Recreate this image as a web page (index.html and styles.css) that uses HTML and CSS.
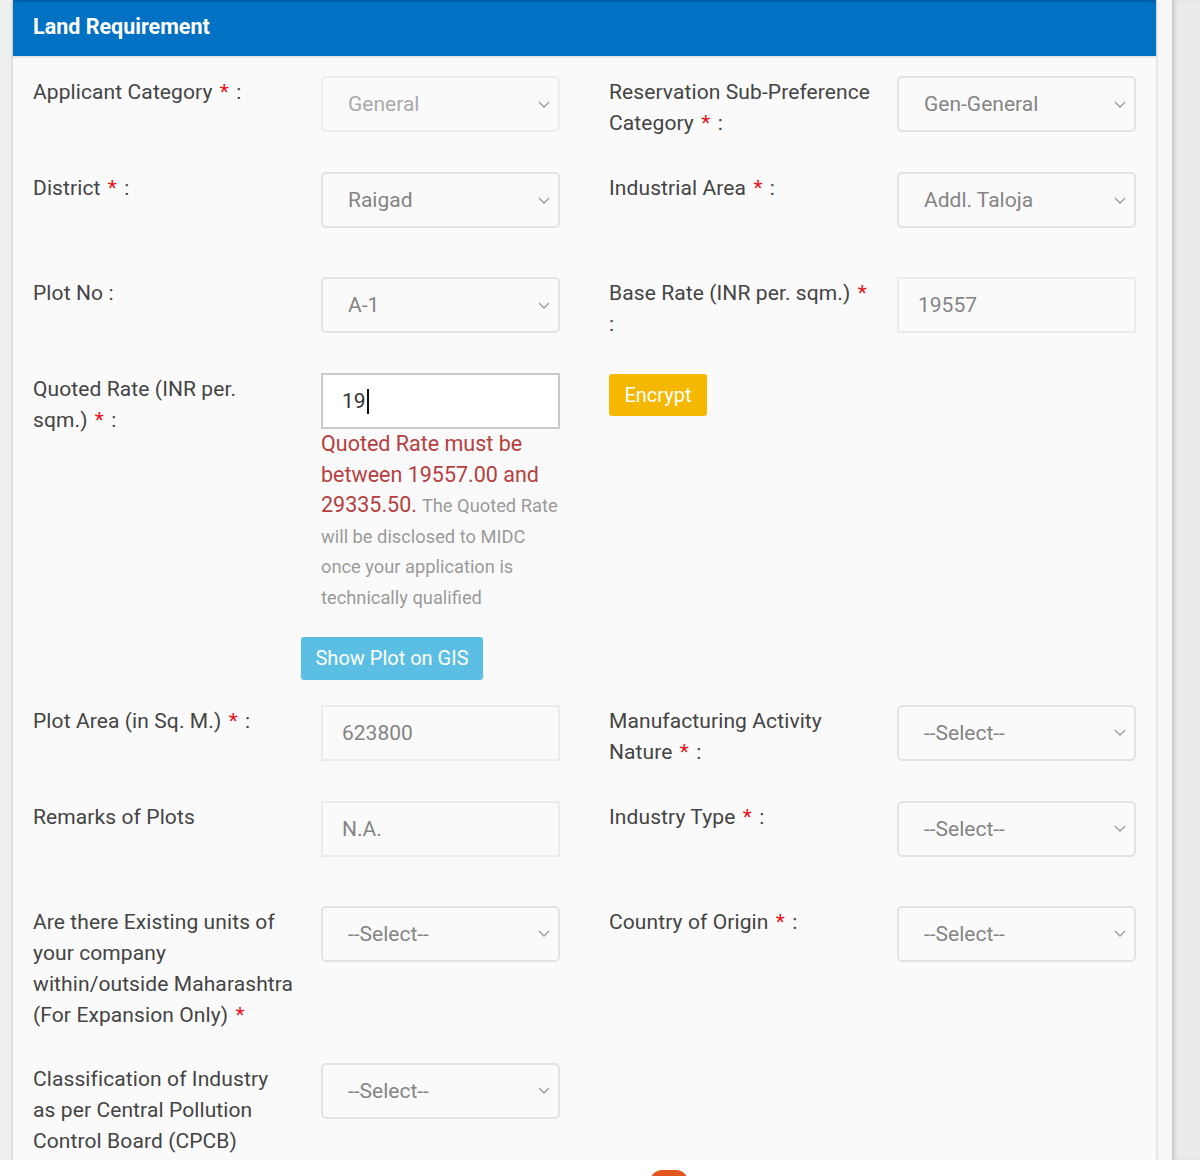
FILE: index.html
```html
<!DOCTYPE html>
<html lang="en">
<head>
<meta charset="utf-8">
<title>Land Requirement</title>
<link rel="stylesheet" href="styles.css">
</head>
<body>
<div class="screen">
  <div class="gutter-left"></div>
  <div class="panel">
    <div class="panel-heading">Land Requirement</div>
    <div class="panel-body">

      <div class="form-row">
        <div class="label">Applicant Category <span class="req">*</span> :</div>
        <div class="cell"><div class="select disabled"><span>General</span><svg class="chev" width="12" height="7" viewBox="0 0 12 7"><polyline points="1,1 6,6 11,1"/></svg></div></div>
        <div class="label">Reservation Sub-Preference<br>Category <span class="req">*</span> :</div>
        <div class="cell"><div class="select"><span>Gen-General</span><svg class="chev" width="12" height="7" viewBox="0 0 12 7"><polyline points="1,1 6,6 11,1"/></svg></div></div>
      </div>

      <div class="form-row spaced">
        <div class="label">District <span class="req">*</span> :</div>
        <div class="cell"><div class="select"><span>Raigad</span><svg class="chev" width="12" height="7" viewBox="0 0 12 7"><polyline points="1,1 6,6 11,1"/></svg></div></div>
        <div class="label">Industrial Area <span class="req">*</span> :</div>
        <div class="cell"><div class="select"><span>Addl. Taloja</span><svg class="chev" width="12" height="7" viewBox="0 0 12 7"><polyline points="1,1 6,6 11,1"/></svg></div></div>
      </div>

      <div class="form-row">
        <div class="label">Plot No :</div>
        <div class="cell"><div class="select"><span>A-1</span><svg class="chev" width="12" height="7" viewBox="0 0 12 7"><polyline points="1,1 6,6 11,1"/></svg></div></div>
        <div class="label">Base Rate (INR per. sqm.) <span class="req">*</span><br>:</div>
        <div class="cell"><div class="text-input">19557</div></div>
      </div>

      <div class="form-row quoted">
        <div class="label">Quoted Rate (INR per.<br>sqm.) <span class="req">*</span> :</div>
        <div class="cell">
          <div class="text-input active">19<span class="caret"></span></div>
          <div class="help"><span class="error">Quoted Rate must be<br>between 19557.00 and<br>29335.50.</span> <span class="note">The Quoted Rate<br>will be disclosed to MIDC<br>once your application is<br>technically qualified</span></div>
          <button class="btn btn-info" type="button">Show Plot on GIS</button>
        </div>
        <div class="label"><button class="btn btn-warning" type="button">Encrypt</button></div>
        <div class="cell"></div>
      </div>

      <div class="form-row">
        <div class="label">Plot Area (in Sq. M.) <span class="req">*</span> :</div>
        <div class="cell"><div class="text-input">623800</div></div>
        <div class="label">Manufacturing Activity<br>Nature <span class="req">*</span> :</div>
        <div class="cell"><div class="select"><span>--Select--</span><svg class="chev" width="12" height="7" viewBox="0 0 12 7"><polyline points="1,1 6,6 11,1"/></svg></div></div>
      </div>

      <div class="form-row spaced">
        <div class="label">Remarks of Plots</div>
        <div class="cell"><div class="text-input">N.A.</div></div>
        <div class="label">Industry Type <span class="req">*</span> :</div>
        <div class="cell"><div class="select"><span>--Select--</span><svg class="chev" width="12" height="7" viewBox="0 0 12 7"><polyline points="1,1 6,6 11,1"/></svg></div></div>
      </div>

      <div class="form-row">
        <div class="label">Are there Existing units of<br>your company<br>within/outside Maharashtra<br>(For Expansion Only) <span class="req">*</span></div>
        <div class="cell"><div class="select"><span>--Select--</span><svg class="chev" width="12" height="7" viewBox="0 0 12 7"><polyline points="1,1 6,6 11,1"/></svg></div></div>
        <div class="label">Country of Origin <span class="req">*</span> :</div>
        <div class="cell"><div class="select"><span>--Select--</span><svg class="chev" width="12" height="7" viewBox="0 0 12 7"><polyline points="1,1 6,6 11,1"/></svg></div></div>
      </div>

      <div class="form-row">
        <div class="label">Classification of Industry<br>as per Central Pollution<br>Control Board (CPCB)</div>
        <div class="cell"><div class="select"><span>--Select--</span><svg class="chev" width="12" height="7" viewBox="0 0 12 7"><polyline points="1,1 6,6 11,1"/></svg></div></div>
        <div class="label"></div>
        <div class="cell"></div>
      </div>

    </div>
  </div>
  <div class="gap"></div>
  <div class="strip-right"></div>
</div>
<div class="bottom">
  <div class="fab"></div>
</div>
</body>
</html>
```

FILE: styles.css
```css
html, body {
  margin: 0;
  padding: 0;
  background: #ffffff;
  font-family: Roboto, "Noto Sans", "Liberation Sans", sans-serif;
}

.screen {
  display: flex;
  height: 1160px;
  overflow: hidden;
  background: #f4f4f4;
}

.gutter-left {
  width: 13px;
  flex: none;
  background: #efefef;
}

.panel {
  width: 1143px;
  flex: none;
  background: #fafafa;
  box-shadow: 0 0 3px rgba(0, 0, 0, 0.22);
  position: relative;
  z-index: 1;
}

.panel-heading {
  height: 56px;
  box-sizing: border-box;
  background: #0071c3;
  color: #ffffff;
  font-weight: 700;
  font-size: 21.5px;
  line-height: 54px;
  padding-left: 20px;
  box-shadow: inset 0 3px 3px -2px rgba(0, 0, 0, 0.25), 0 1px 2px rgba(0, 0, 0, 0.15);
}

.panel-body {
  padding: 20px 20px 0 20px;
}

.form-row {
  display: grid;
  grid-template-columns: 288px 288px 288px 239px;
  align-items: start;
  min-height: 96px;
  box-sizing: border-box;
  padding-bottom: 32px;
}

.form-row.spaced {
  min-height: 105px;
}

.form-row.quoted {
  padding-bottom: 25px;
}

.label {
  font-size: 21px;
  line-height: 31px;
  color: #444444;
  white-space: nowrap;
  padding-top: 1px;
  letter-spacing: 0.1px;
}

.req {
  color: #e8121b;
  padding: 0 2px;
}

.cell {
  width: 239px;
}

.select {
  height: 56px;
  box-sizing: border-box;
  border: 2px solid #e3e3e3;
  border-radius: 5px;
  display: flex;
  align-items: center;
  justify-content: space-between;
  padding: 0 8px 0 25px;
  font-size: 21px;
  color: #858585;
  background: #fafafa;
}

.select.disabled {
  border-color: #eeeeee;
  color: #aaaaaa;
}

.chev polyline {
  fill: none;
  stroke: #9a9a9a;
  stroke-width: 1.3;
}

.text-input {
  height: 56px;
  box-sizing: border-box;
  border: 2px solid #ebebeb;
  display: flex;
  align-items: center;
  padding-left: 19px;
  font-size: 21px;
  color: #858585;
  background: #fafafa;
}

.text-input.active {
  background: #ffffff;
  border-color: #c9c9c9;
  color: #333333;
}

.caret {
  display: inline-block;
  width: 2px;
  height: 25px;
  background: #111111;
  margin-left: 1px;
}

.help {
  font-size: 20px;
  line-height: 30.6px;
  white-space: nowrap;
}

.error {
  color: #b5403f;
  font-size: 21.5px;
  line-height: 1;
}

.note {
  color: #9a9a9a;
  font-size: 18.3px;
  line-height: 1;
}

.btn {
  border: none;
  border-radius: 3px;
  color: #ffffff;
  font-family: Roboto, "Noto Sans", "Liberation Sans", sans-serif;
  font-size: 20px;
  cursor: pointer;
}

.btn-info {
  background: #5bbfe3;
  width: 182px;
  height: 43px;
  margin-top: 24px;
  margin-left: -20px;
  display: block;
  padding: 0;
}

.btn-warning {
  background: #f5b700;
  width: 98px;
  height: 42px;
  margin-top: 0;
  padding: 0;
}

.gap {
  width: 16px;
  flex: none;
  background: #f6f6f6;
}

.strip-right {
  flex: 1;
  background: #ebebeb;
  box-shadow: inset 4px 0 4px -2px rgba(0, 0, 0, 0.18);
}

.bottom {
  height: 16px;
  background: #ffffff;
  overflow: hidden;
  padding-left: 650px;
  padding-top: 10px;
  box-sizing: border-box;
}

.fab {
  width: 38px;
  height: 20px;
  background: #e2561f;
  border-radius: 12px 12px 0 0;
}
```
